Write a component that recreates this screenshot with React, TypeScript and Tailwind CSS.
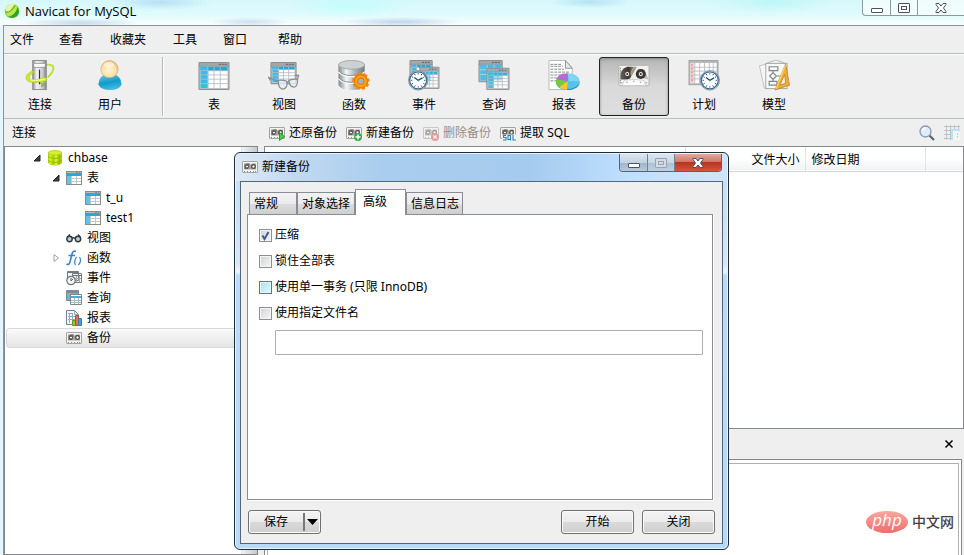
import React from "react";

/* ---------- shared drawing parts ---------- */

function Grid({ x = 0, y = 0, w = 32, h = 29 }: { x?: number; y?: number; w?: number; h?: number }) {
    const cols = [0.27, 0.5, 0.73];
    const rows = [0.18, 0.38, 0.58, 0.79];
    const iw = w - 4;
    const ih = h - 7;
    return (
        <g transform={`translate(${x} ${y})`}>
            <rect width={w} height={h} rx="1" fill="#8b8d8f" />
            <rect x="1" y="1" width={w - 2} height="3" fill="#a5a6a8" />
            {[11, 8, 5].map((d) => (
                <rect key={d} x={w - d} y="2" width="2" height="1" fill="#5e6063" />
            ))}
            <rect x="1" y="5" width={w - 2} height={h - 6} fill="#b9bbbd" />
            <rect x="2" y="5" width={iw} height={ih} fill="#fff" />
            <rect x="2" y="5" width={iw} height={ih * 0.2} fill="#1da9de" />
            <rect x="2" y="5" width={iw * 0.29} height={ih} fill="#3eb8e4" />
            {cols.map((c) => (
                <path key={c} d={`M${2 + iw * c} 5v${ih}`} stroke="#b4bec3" strokeWidth="0.9" />
            ))}
            {rows.map((r) => (
                <path key={r} d={`M2 ${5 + ih * r}h${iw}`} stroke="#b4bec3" strokeWidth="0.9" />
            ))}
        </g>
    );
}

function ClockFace({ cx, cy, r }: { cx: number; cy: number; r: number }) {
    return (
        <g>
            <circle cx={cx} cy={cy} r={r} fill="#fff" stroke="#8193a3" strokeWidth="1" />
            <circle cx={cx} cy={cy} r={r - 1.2} fill="#fdfeff" stroke="#3c6890" strokeWidth="1.3" />
            {[0, 30, 60, 90, 120, 150, 180, 210, 240, 270, 300, 330].map((a) => (
                <path
                    key={a}
                    d={`M${cx} ${cy - r + 2.5}v1.4`}
                    stroke="#2a3b4a"
                    strokeWidth="0.9"
                    transform={`rotate(${a} ${cx} ${cy})`}
                />
            ))}
            <path d={`M${cx - 4} ${cy - 3}l4 3l4.5 -2.5`} fill="none" stroke="#1c4a63" strokeWidth="1.3" />
            <circle cx={cx} cy={cy} r="1.1" fill="#2798a8" />
        </g>
    );
}

/* ---------- toolbar icons ---------- */

function ConnectIcon() {
    return (
        <svg viewBox="0 0 32 32" className="h-8 w-8" aria-hidden="true">
            <defs>
                <linearGradient id="tower" x1="0" x2="1">
                    <stop offset="0" stopColor="#8f8f8f" />
                    <stop offset="0.3" stopColor="#f4f4f4" />
                    <stop offset="0.7" stopColor="#cfcfcf" />
                    <stop offset="1" stopColor="#838383" />
                </linearGradient>
            </defs>
            <path d="M8 11Q22 2 29 6Q32 10 24 18" fill="none" stroke="#b8e22c" strokeWidth="2" />
            <rect x="8.5" y="0.5" width="14" height="30" fill="url(#tower)" stroke="#8c8c8c" />
            <path d="M10 3.5h11M10 7.5h11" stroke="#979797" />
            <rect x="10" y="4" width="11" height="3" fill="#fafafa" />
            <path d="M15.5 10v15" stroke="#303030" strokeWidth="1.2" />
            <path
                d="M9 11Q1 14 1.500 19Q3 24 13 23L22 22Q24 20 22 18Q13 21 6 20Q3 17 9 13Z"
                fill="#c6ed2c"
                stroke="#9dcb1a"
                strokeWidth="0.6"
            />
            <path d="M6 20.500Q14 22 21 19.500" fill="none" stroke="#f6ff7d" strokeWidth="1.4" />
            <path d="M16 24h2v2h2v-2h2M18 26v2" fill="none" stroke="#83b51b" strokeWidth="1.2" />
        </svg>
    );
}

function UserIcon() {
    return (
        <svg viewBox="0 0 32 32" className="h-8 w-8" aria-hidden="true">
            <defs>
                <radialGradient id="head" cx="0.45" cy="0.6" r="0.65">
                    <stop offset="0" stopColor="#fff3d3" />
                    <stop offset="0.65" stopColor="#fbdfa6" />
                    <stop offset="1" stopColor="#e2b264" />
                </radialGradient>
                <linearGradient id="torso" x1="0" x2="0.3" y1="0" y2="1">
                    <stop offset="0" stopColor="#66c7e2" />
                    <stop offset="0.6" stopColor="#129dcb" />
                    <stop offset="1" stopColor="#40b9e0" />
                </linearGradient>
            </defs>
            <path d="M4 25Q5 16 12 15H20Q27 16 28 25Q26 31 16 31T4 25Z" fill="url(#torso)" />
            <circle cx="15.500" cy="9.500" r="8.900" fill="url(#head)" stroke="#c9a262" strokeWidth="0.6" />
            <ellipse cx="15" cy="5" rx="5.500" ry="3" fill="#fff" opacity="0.5" />
        </svg>
    );
}

function TableIcon() {
    return (
        <svg viewBox="0 0 32 32" className="h-8 w-8" aria-hidden="true">
            <Grid y={2} />
        </svg>
    );
}

function ViewIcon() {
    return (
        <svg viewBox="0 0 32 32" className="h-8 w-8" aria-hidden="true">
            <Grid x={2} y={2} w={27} h={23} />
            <g fill="#e3edf1" fillOpacity="0.85" stroke="#868e92" strokeWidth="1.3">
                <path d="M10 21Q15 20 19 22Q20 30 14 30Q10 29 10 21Z" />
                <path d="M21 21Q27 19 30 20Q30 28 26 28Q22 28 21 21Z" />
                <path d="M19 23l2 -1M10 22L0 18l2 3M30 20l1 -4l-4 0" fill="none" />
            </g>
        </svg>
    );
}

function FunctionIcon() {
    return (
        <svg viewBox="0 0 32 32" className="h-8 w-8" aria-hidden="true">
            <defs>
                <linearGradient id="drum" x1="0" x2="1">
                    <stop offset="0" stopColor="#7f8789" />
                    <stop offset="0.3" stopColor="#f5f7f7" />
                    <stop offset="0.65" stopColor="#a6aeb0" />
                    <stop offset="1" stopColor="#727b7e" />
                </linearGradient>
                <radialGradient id="cog">
                    <stop offset="0" stopColor="#ffe36b" />
                    <stop offset="0.6" stopColor="#ffb21e" />
                    <stop offset="1" stopColor="#f27c0a" />
                </radialGradient>
            </defs>
            <path d="M0 5V26Q3 31 13 31T27 26V5Z" fill="url(#drum)" />
            <path d="M0 12Q4 17 13 17T27 12M0 19Q4 24 13 24T27 19" fill="none" stroke="#f8fafa" strokeWidth="1.5" />
            <path d="M0 11Q4 16 13 16T27 11M0 18Q4 23 13 23T27 18" fill="none" stroke="#727d80" strokeWidth="0.8" />
            <ellipse cx="13.500" cy="5" rx="13.500" ry="4.500" fill="#ccd2d3" stroke="#959da0" strokeWidth="0.8" />
            <g fill="#f58a0b">
                {[0, 40, 80, 120, 160, 200, 240, 280, 320].map((a) => (
                    <path key={a} d="M21 17l0.600 -4h3l0.600 4z" transform={`rotate(${a} 23.100 22)`} />
                ))}
            </g>
            <circle cx="23.100" cy="22" r="7" fill="url(#cog)" stroke="#ed780a" />
            <circle cx="23.100" cy="22" r="3.300" fill="#a8b3b7" stroke="#d77910" strokeWidth="1.2" />
        </svg>
    );
}

function EventIcon() {
    return (
        <svg viewBox="0 0 32 32" className="h-8 w-8" aria-hidden="true">
            <Grid x={1} y={0} w={24} h={22} />
            <g opacity="0.9">
                <Grid x={11} y={7} w={21} h={23} />
            </g>
            <rect x="12" y="12" width="11" height="9" fill="#58bde2" opacity="0.5" />
            <ClockFace cx={10} cy={21} r={10} />
        </svg>
    );
}

function QueryIcon() {
    return (
        <svg viewBox="0 0 32 32" className="h-8 w-8" aria-hidden="true">
            <Grid x={0} y={0} w={25} h={23} />
            <rect x="2" y="5" width="21" height="16" fill="#4fbbe2" opacity="0.8" />
            <path d="M2 10h21M2 15h21M9 5v16M16 5v16" stroke="#a5d8e8" />
            <g opacity="0.92">
                <Grid x={8} y={8} w={24} h={23} />
            </g>
            <rect x="10" y="13" width="14" height="8" fill="#4bb8df" opacity="0.45" />
        </svg>
    );
}

function ReportIcon() {
    return (
        <svg viewBox="0 0 32 32" className="h-8 w-8" aria-hidden="true">
            <path d="M0.500 0.500h17l7 8v22h-24z" fill="#fff" stroke="#b6babb" />
            <path d="M17.500 0.500v8h7z" fill="#e8eaea" stroke="#8d9597" />
            <path
                d="M2 4.500h12M2 6.500h13M2 9.500h14M2 12.500h20M2 15.500h12M2 18.500h7M2 21.500h6"
                stroke="#838687"
                strokeDasharray="3 1"
            />
            <ellipse cx="20" cy="23.500" rx="12" ry="7.500" fill="#198ebd" />
            <ellipse cx="20" cy="22" rx="12" ry="8" fill="#57c0eb" />
            <path d="M20 22L8 20Q11 13 20 14Z" fill="#b76ad2" />
            <path d="M20 22L8 20Q6 24 11 28Z" fill="#76ca36" />
            <path d="M20 22L11 28Q15 31 19 31Z" fill="#f9c82e" />
            <path d="M21 22L20 14Q31 14 32 22Z" fill="#7fd5f5" />
        </svg>
    );
}

function BackupIcon() {
    return (
        <svg viewBox="0 0 32 32" className="h-8 w-8" aria-hidden="true">
            <defs>
                <linearGradient id="reel" x1="0" x2="1">
                    <stop offset="0" stopColor="#6b6256" />
                    <stop offset="0.6" stopColor="#3a342e" />
                    <stop offset="1" stopColor="#968b7c" />
                </linearGradient>
            </defs>
            <rect x="0.500" y="5.500" width="31" height="21" rx="1" fill="#f1f1ef" stroke="#b3b3b1" />
            <path d="M2 20Q1 9 9 7H16L13 12Q15 19 9 20Z" fill="url(#reel)" />
            <path d="M16 7l-4 7l2 2l5 -9z" fill="#a39a8c" />
            <path d="M20 9l7 1l4 10l-5 -1z" fill="#c3bdb4" />
            <circle cx="23" cy="14.500" r="5.200" fill="#3b352f" />
            <circle cx="9" cy="14.500" r="2.600" fill="#f5f5f5" stroke="#26231f" strokeWidth="0.8" />
            <circle cx="23" cy="14.500" r="2.600" fill="#f5f5f5" stroke="#26231f" strokeWidth="0.8" />
            <circle cx="9" cy="14.500" r="1.100" fill="#2c2824" />
            <circle cx="23" cy="14.500" r="1.100" fill="#2c2824" />
            <path d="M4 26l2 -5q10 -2 20 0l2 5" fill="#fcfcfc" stroke="#c9c9c7" strokeWidth="0.8" />
            <path d="M2 8v16M8 23h2M15 22h2M22 23h2M2 23.500h2M28 23.500h2" stroke="#8d8d8a" strokeDasharray="1.500 1" />
        </svg>
    );
}

function PlanIcon() {
    return (
        <svg viewBox="0 0 32 32" className="h-8 w-8" aria-hidden="true">
            <rect x="0.500" y="0.500" width="30" height="25" fill="#b3b6b8" stroke="#a1a3a5" />
            <rect x="2" y="3" width="27" height="21" fill="#fff" />
            <rect x="2" y="3" width="4" height="21" fill="#f9d3d2" />
            <path
                d="M2 7.500h27M2 11.500h27M2 15.500h27M2 19.500h27M6.500 3v21M11.500 3v21M16.500 3v21M21.500 3v21M25.500 3v21"
                stroke="#bfc0c3"
            />
            <path d="M3.500 4v19" stroke="#e26c6c" strokeDasharray="2 2" />
            <ClockFace cx={22} cy={21} r={10} />
        </svg>
    );
}

function ModelIcon() {
    return (
        <svg viewBox="0 0 32 32" className="h-8 w-8" aria-hidden="true">
            <path d="M1 6l8 -2l5 24l-8 1z" fill="#f6f6f6" stroke="#c2c2c2" />
            <path d="M9 3l9 -3l11 4l-5 24H10z" fill="#f1f1f1" stroke="#b5b5b5" />
            <rect x="7.500" y="3.500" width="22" height="26" fill="#f7f8f8" stroke="#a6a6a6" />
            <path
                d="M11 7h9v4h-9zM15 11v2M15 13l3.500 3.500l-3.500 3.500l-3.500 -3.500zM15 20v2M11 22h8v4h-8zM19 16.500h6"
                fill="none"
                stroke="#858585"
                strokeWidth="1.2"
            />
            <path d="M28 4L32 26L17 31Z" fill="#f0ae33" stroke="#b98124" strokeWidth="0.8" />
            <path d="M27 15L28 24L22 26Z" fill="#f7f2e3" stroke="#b67c1a" strokeWidth="0.8" />
            <path d="M28 5L18 30" stroke="#ffdf7c" />
        </svg>
    );
}

/* ---------- 16px icons ---------- */

function SmallTableIcon() {
    return (
        <svg viewBox="0 0 16 16" className="h-4 w-4 shrink-0" shapeRendering="crispEdges" aria-hidden="true">
            <rect y="1" width="16" height="14" fill="#898b8d" />
            <path d="M1 2.500h9M12 2.500h1M14 2.500h1" stroke="#b9bcbe" />
            <rect x="1" y="4" width="14" height="10" fill="#fff" />
            <rect x="1" y="4" width="14" height="2" fill="#2ca6d6" />
            <rect x="1" y="6" width="4" height="8" fill="#62c3e6" />
            <path d="M5 8.500h10M5 11.500h10M5.500 6v8M10.500 6v8" stroke="#c3c7c9" />
        </svg>
    );
}

function DatabaseIcon() {
    return (
        <svg viewBox="0 0 16 16" className="h-4 w-4 shrink-0" aria-hidden="true">
            <path d="M1 2.500V13Q3 15.500 8 15.500T15 13V2.500Z" fill="#b0d800" />
            <path d="M3.500 4v10M9 5v10" stroke="#dcf03a" strokeWidth="2.200" />
            <path d="M12.500 4v10" stroke="#8fbd00" strokeWidth="1.500" />
            <path d="M1 6.500Q4 8.500 8 8.500T15 6.500M1 10.500Q4 12.500 8 12.500T15 10.500" fill="none" stroke="#8db304" strokeWidth="0.9" />
            <ellipse cx="8" cy="2.800" rx="6.800" ry="2.300" fill="#d6ee33" stroke="#a5cb0a" strokeWidth="0.7" />
        </svg>
    );
}

function GlassesIcon() {
    return (
        <svg viewBox="0 0 16 16" className="h-4 w-4 shrink-0" aria-hidden="true">
            <g fill="#acd0dd" stroke="#30383c" strokeWidth="1.4">
                <circle cx="3.500" cy="9" r="2.700" />
                <circle cx="12" cy="9" r="2.700" />
                <path d="M6 8.500Q7.500 7 9 8.500M1.500 7L4 4.500M14 7L12 4.500" fill="none" />
            </g>
        </svg>
    );
}

function FxIcon() {
    return (
        <svg viewBox="0 0 16 16" className="h-4 w-4 shrink-0" fill="none" stroke="#3d82bd" aria-hidden="true">
            <path d="M10 1.500Q7 0 6 4L4 12Q3 15.500 0.500 14M2.500 5.500H9" strokeWidth="1.6" />
            <path d="M10.500 7Q7.500 11 9.500 15M13.500 7Q16 11 12.500 15" strokeWidth="1.2" />
        </svg>
    );
}

function SmallEventIcon() {
    return (
        <svg viewBox="0 0 16 16" className="h-4 w-4 shrink-0" aria-hidden="true">
            <path d="M1.500 1.500h11v9h-11zM6.500 3.500h9v9h-9z" fill="#f3f4f4" stroke="#777d80" />
            <path d="M2 2.500h10M7 5.500h8" stroke="#6f777b" />
            <path d="M8 8.500h7M10.500 6v6M13.500 6v6" stroke="#a2abb0" />
            <circle cx="5" cy="10.500" r="4.200" fill="#f3f5f6" stroke="#6e777c" strokeWidth="1.2" />
            <path d="M5 8v3l2 -2" fill="none" stroke="#536168" />
        </svg>
    );
}

function SmallQueryIcon() {
    return (
        <svg viewBox="0 0 16 16" className="h-4 w-4 shrink-0" aria-hidden="true">
            <path d="M0.500 0.500h12v10h-12z" fill="#5dbbdb" stroke="#7c8a90" />
            <path d="M1 2h11" stroke="#84898c" strokeWidth="2" />
            <path d="M4.500 4.500h11v10h-11z" fill="#fff" stroke="#7c868b" />
            <path d="M5 7h10" stroke="#46aed2" strokeWidth="2" />
            <path d="M5 10.500h10M5 12.500h10M8.500 8v6M12.500 8v6" stroke="#a9b9bf" />
        </svg>
    );
}

function SmallReportIcon() {
    return (
        <svg viewBox="0 0 16 16" className="h-4 w-4 shrink-0" aria-hidden="true">
            <path d="M0.500 0.500h8l4 4v10h-12z" fill="#f3f6f7" stroke="#6d8293" />
            <path d="M8.500 0.500v4h4M2 3.500h5M2 6.500h9M2 9.500h9M3.500 3v10M6.500 3v10" fill="none" stroke="#8fabbd" />
            <path d="M6.500 10.500h3v5h-3z" fill="#93c930" stroke="#669b17" />
            <path d="M9.500 5.500h3v10h-3z" fill="#f26c53" stroke="#c24733" />
            <path d="M12.500 8.500h3v7h-3z" fill="#4d9cd0" stroke="#337db1" />
        </svg>
    );
}

function TapeIcon({ mark }: { mark?: "restore" | "add" | "remove" | "sql" }) {
    return (
        <svg viewBox="0 0 16 16" className={`h-4 w-4 shrink-0 ${mark === "remove" ? "opacity-50" : ""}`} aria-hidden="true">
            <rect x="0.500" y="2.500" width="15" height="11" rx="0.500" fill="#f4f4f2" stroke="#a3a3a1" />
            <path d="M2 4.500h5l1 1h1l1 -1h4v6H2z" fill="#a5a19b" />
            <path d="M2.500 10V6L4.500 4.500H8L6 10z" fill="#6f6a63" />
            <circle cx="5" cy="7.500" r="1.500" fill="#fff" stroke="#45423e" />
            <circle cx="11.500" cy="7.500" r="1.800" fill="#fff" stroke="#45423e" strokeWidth="1.2" />
            <path d="M2 12.500h1M5 12.500h1M8 12.500h1M11 12.500h1M13 12.500h1" stroke="#8a8a88" />
            {mark === "restore" && <path d="M10.500 7.500l5 4l-5 4z" fill="#3fd63e" stroke="#138d20" strokeWidth="0.8" />}
            {mark === "add" && (
                <g>
                    <circle cx="12" cy="12" r="3.900" fill="#2fae3d" />
                    <path d="M9.500 12h5M12 9.500v5" stroke="#fff" strokeWidth="1.5" />
                </g>
            )}
            {mark === "remove" && (
                <g>
                    <circle cx="12" cy="12" r="3.900" fill="#e14747" />
                    <path d="M10.300 10.300l3.400 3.400M13.700 10.300l-3.400 3.400" stroke="#fff" strokeWidth="1.2" />
                </g>
            )}
            {mark === "sql" && (
                <g>
                    <rect x="2" y="9.500" width="14" height="6.500" fill="#eef4f5" />
                    <g fill="none" stroke="#2583a8" strokeWidth="1.1">
                        <path d="M6 10.500H3.500v2H6v2.500H3M8 10.500h2.500v4H8zM10 14l1 1.500M13 10v5h3" />
                    </g>
                </g>
            )}
        </svg>
    );
}

function NavicatLogo() {
    return (
        <svg viewBox="0 0 16 16" className="h-4 w-4" aria-hidden="true">
            <circle cx="8" cy="8" r="7.300" fill="#8fd32a" />
            <path d="M1 5Q5 -1 11 1Q8 5 6 8Q2 10 1 5Z" fill="#e3f6b0" />
            <path d="M13 4Q17 8 13 13Q9 16 4 14Q12 12 13 4Z" fill="#2f9e2b" />
            <path d="M2 10Q9 9 12 2Q14 4 12 8Q9 13 4 13Z" fill="#b9e64c" />
            <path d="M1.500 9.500Q8 9 11 2" fill="none" stroke="#55ac2a" strokeWidth="0.8" />
        </svg>
    );
}

function SearchIcon() {
    return (
        <svg viewBox="0 0 16 16" className="h-4 w-4" aria-hidden="true">
            <path d="M10.500 10.500L15 15" stroke="#5f636b" strokeWidth="2.2" />
            <circle cx="6.500" cy="6.500" r="5.500" fill="#dcecff" stroke="#8496b0" strokeWidth="1.3" />
            <path d="M3.500 6Q4 3 7 3" fill="none" stroke="#fff" strokeWidth="1.5" />
        </svg>
    );
}

function GridViewIcon() {
    return (
        <svg viewBox="0 0 16 16" className="h-4 w-4" shapeRendering="crispEdges" aria-hidden="true">
            <path
                d="M0 1.500h16M0 5.500h7M0 9.500h7M0 13.500h7M2.500 0v15M6.500 0v15M10.500 0v4M14.500 0v4"
                stroke="#c0c1c1"
            />
            <path d="M7 4h9v11H7z" fill="#f5f5f5" />
            <path d="M7 4h9v2H9v9H7z" fill="#b3e4fb" />
            <path d="M13.500 8v6" stroke="#ccc" strokeDasharray="2 1" />
        </svg>
    );
}

function WindowGlyph({ kind, muted = false }: { kind: "min" | "max" | "close"; muted?: boolean }) {
    const stroke = muted ? "#96a3b1" : "#4c5160";
    return (
        <svg viewBox="0 0 12 12" className="h-3 w-3" aria-hidden="true">
            {kind === "min" && <rect x="0.500" y="6.500" width="11" height="4" rx="0.500" fill="#fff" stroke={stroke} />}
            {kind === "max" && (
                <g fill={muted ? "#d3dce5" : "#fff"} stroke={stroke}>
                    <rect x="0.500" y="1.500" width="11" height="9" rx="0.500" />
                    <rect x="3.500" y="4.500" width="5" height="3" />
                </g>
            )}
            {kind === "close" && (
                <path
                    d="M1 1.500h3l2 2.500l2 -2.500h3v1l-2.500 3.500l2.500 3.500v1h-3l-2 -2.500l-2 2.500h-3v-1l2.500 -3.500l-2.500 -3.500z"
                    fill="#fff"
                    stroke={stroke}
                />
            )}
        </svg>
    );
}

function Twisty({ open }: { open: boolean }) {
    return (
        <svg viewBox="0 0 8 8" className="h-2 w-2" aria-hidden="true">
            {open ? (
                <path d="M7 1v6H1z" fill="#404040" stroke="#222" />
            ) : (
                <path d="M2 0.500v7l4.500 -3.500z" fill="#fff" stroke="#a0a0a0" />
            )}
        </svg>
    );
}

/* ---------- data ---------- */

const menus = [
    { label: "文件", width: "w-[49px]" },
    { label: "查看", width: "w-[51px]" },
    { label: "收藏夹", width: "w-[63px]" },
    { label: "工具", width: "w-[50px]" },
    { label: "窗口", width: "w-[55px]" },
    { label: "帮助", width: "w-[50px]" },
];

const accountTools = [
    { label: "连接", icon: <ConnectIcon /> },
    { label: "用户", icon: <UserIcon /> },
];

const objectTools = [
    { label: "表", icon: <TableIcon /> },
    { label: "视图", icon: <ViewIcon /> },
    { label: "函数", icon: <FunctionIcon /> },
    { label: "事件", icon: <EventIcon /> },
    { label: "查询", icon: <QueryIcon /> },
    { label: "报表", icon: <ReportIcon /> },
    { label: "备份", icon: <BackupIcon />, active: true },
    { label: "计划", icon: <PlanIcon /> },
    { label: "模型", icon: <ModelIcon /> },
];

const actions = [
    { label: "还原备份", icon: <TapeIcon mark="restore" /> },
    { label: "新建备份", icon: <TapeIcon mark="add" /> },
    { label: "删除备份", icon: <TapeIcon mark="remove" />, disabled: true },
    { label: "提取 SQL", icon: <TapeIcon mark="sql" /> },
];

const indents = ["pl-[26px]", "pl-[45px]", "pl-16"];

const tree: { label: string; level: number; icon: React.ReactNode; open?: boolean; selected?: boolean }[] = [
    { label: "chbase", level: 0, icon: <DatabaseIcon />, open: true },
    { label: "表", level: 1, icon: <SmallTableIcon />, open: true },
    { label: "t_u", level: 2, icon: <SmallTableIcon /> },
    { label: "test1", level: 2, icon: <SmallTableIcon /> },
    { label: "视图", level: 1, icon: <GlassesIcon /> },
    { label: "函数", level: 1, icon: <FxIcon />, open: false },
    { label: "事件", level: 1, icon: <SmallEventIcon /> },
    { label: "查询", level: 1, icon: <SmallQueryIcon /> },
    { label: "报表", level: 1, icon: <SmallReportIcon /> },
    { label: "备份", level: 1, icon: <TapeIcon />, selected: true },
];

const tabs = [
    { label: "常规", width: "w-12" },
    { label: "对象选择", width: "w-[58px]" },
    { label: "高级", width: "w-[51px]", active: true },
    { label: "信息日志", width: "w-[57px]" },
];

const options = [
    { id: "compress", label: "压缩", checked: true },
    { id: "lock-tables", label: "锁住全部表" },
    { id: "single-transaction", label: "使用单一事务 (只限 InnoDB)", hot: true },
    { id: "custom-name", label: "使用指定文件名" },
];

/* ---------- components ---------- */

function ToolButton({ label, icon, active = false }: { label: string; icon: React.ReactNode; active?: boolean }) {
    return (
        <button
            type="button"
            aria-pressed={active}
            className={`flex h-[59px] w-[70px] shrink-0 flex-col items-center rounded-[3px] border pt-0.5 ${
                active
                    ? "border-[#222] bg-linear-to-b from-[#b5b5b5] via-[#d9d9d9] to-[#dedede] shadow-[inset_0_1px_3px_#888]"
                    : "border-transparent"
            }`}
        >
            {icon}
            <span className="mt-1 leading-5">{label}</span>
        </button>
    );
}

function TitleBar() {
    return (
        <header className="flex h-[25px] shrink-0 items-start bg-[radial-gradient(ellipse_60px_5px_at_80px_23px,#a9c6e0a0,transparent),radial-gradient(ellipse_60px_5px_at_400px_22px,#a5c4e6b0,transparent),radial-gradient(ellipse_40px_5px_at_250px_22px,#b4cfe8a0,transparent),radial-gradient(ellipse_40px_6px_at_590px_2px,#9fd4f0a0,transparent),radial-gradient(ellipse_50px_8px_at_160px_2px,#9fcdee90,transparent),radial-gradient(ellipse_60px_12px_at_350px_6px,#b9ffffb0,transparent),radial-gradient(ellipse_60px_12px_at_770px_2px,#b2f6f6b0,transparent),linear-gradient(to_bottom,#d5f8fa,#e0fbfc_60%,#fafdfe)] pl-1">
            <div className="flex items-center gap-[5px] pt-px">
                <NavicatLogo />
                <h1 className="font-['Open_Sans',sans-serif] text-[13px] leading-5">Navicat for MySQL</h1>
            </div>
            <div className="ml-auto flex h-4 rounded-bl border-b border-l border-[#8b9a9c] bg-white/60">
                <button type="button" aria-label="最小化" className="flex w-7 items-center justify-center border-r border-[#8b9a9c]">
                    <WindowGlyph kind="min" />
                </button>
                <button type="button" aria-label="最大化" className="flex w-[27px] items-center justify-center border-r border-[#8b9a9c]">
                    <WindowGlyph kind="max" />
                </button>
                <button type="button" aria-label="关闭窗口" className="flex w-[46px] items-center justify-center">
                    <WindowGlyph kind="close" />
                </button>
            </div>
        </header>
    );
}

function ConnectionTree() {
    return (
        <aside className="flex w-[254px] shrink-0 border border-[#828790] bg-white">
            <ul className="min-w-0 flex-1 py-px">
                {tree.map(({ label, level, icon, open, selected }) => (
                    <li
                        key={label + level}
                        className={`mx-px flex h-5 items-center rounded-[3px] border ${
                            selected ? "border-[#d9d9d9] bg-linear-to-b from-[#fafafa] to-[#e5e5e5]" : "border-transparent"
                        }`}
                    >
                        <div className={`flex items-center ${indents[level]}`}>
                            <span className="w-3.5">{open !== undefined && <Twisty open={open} />}</span>
                            {icon}
                            <span className="ml-[5px] leading-4">{label}</span>
                        </div>
                    </li>
                ))}
            </ul>
            <div className="w-4 border-l border-[#e2e2e2] bg-linear-to-r from-[#f3f3f3] to-[#c9c9c9]" />
        </aside>
    );
}

function BackupList() {
    return (
        <div className="h-[283px] shrink-0 border border-[#828790] bg-white">
            <table className="w-full table-fixed border-collapse">
                <thead>
                    <tr className="h-6 border-b border-[#d5d5d5] bg-linear-to-b from-white via-white to-[#f1f2f4]">
                        <th className="w-[420px] border-r border-[#e0e3e6]" />
                        <th className="w-[120px] border-r border-[#e0e3e6] p-0 pt-0.5 pr-[5px] text-right font-normal">文件大小</th>
                        <th className="w-[120px] border-r border-[#e0e3e6] p-0 pt-0.5 pl-1.5 text-left font-normal">修改日期</th>
                        <th />
                    </tr>
                </thead>
            </table>
        </div>
    );
}

function GlossyButton({ children }: { children: React.ReactNode }) {
    return (
        <button
            type="button"
            className="h-6 w-[73px] rounded-[3px] border border-[#707070] bg-[linear-gradient(to_bottom,#f3f3f3,#ebebeb_50%,#dadada_50%,#cfcfcf)] shadow-[inset_0_0_0_1px_#fbfbfb]"
        >
            {children}
        </button>
    );
}

function OptionRow({ id, label, checked = false, hot = false }: { id: string; label: string; checked?: boolean; hot?: boolean }) {
    return (
        <div className="flex h-[26px] items-center">
            <span className="relative h-[13px] w-[13px]">
                <input
                    id={id}
                    type="checkbox"
                    defaultChecked={checked}
                    className={`peer block h-[13px] w-[13px] appearance-none border ${
                        hot
                            ? "border-[#3c7fb1] bg-linear-to-br from-[#a9dcf8] to-[#e8f7ff] shadow-[inset_0_0_0_1px_#def9fa]"
                            : "border-[#8e8f8f] bg-linear-to-br from-[#cfd2d6] to-[#f6f6f6] shadow-[inset_0_0_0_1px_#f4f4f4]"
                    }`}
                />
                <svg
                    viewBox="0 0 13 13"
                    className="pointer-events-none absolute inset-0 hidden h-[13px] w-[13px] peer-checked:block"
                    aria-hidden="true"
                >
                    <path d="M3.500 6.500l2 3.500l4 -7" fill="none" stroke="#41578e" strokeWidth="1.9" />
                </svg>
            </span>
            <label htmlFor={id} className="pl-[3px]">
                {label}
            </label>
        </div>
    );
}

function BackupDialog() {
    return (
        <section
            role="dialog"
            aria-labelledby="dialog-title"
            className="absolute top-[152px] left-[234px] w-[495px] rounded-md border border-[#1d2c3a] bg-[linear-gradient(to_bottom,#c5dcf1,#d5e6f6_28%,#f0f6fc_30%,#b9dbfa_31%,#b7dafa)] px-[5px] pb-[5px] shadow-[inset_0_0_0_1px_#e8f4ff]"
        >
            <div className="-mx-1 mt-px flex h-[27px] items-start rounded-t bg-[linear-gradient(to_right,#dce9f6,#c1d9f0_12%,#a9cdee_30%,#a5cbee_60%,#bfdfff_80%,#d1e4f7)] pl-1.5">
                <div className="flex items-center gap-1 pt-[3px]">
                    <TapeIcon />
                    <h2 id="dialog-title" className="leading-5">
                        新建备份
                    </h2>
                </div>
                <div className="mr-[5px] ml-auto flex h-[18px] overflow-hidden rounded-b border border-t-0 border-[#56616f]">
                    <button
                        type="button"
                        aria-label="最小化对话框"
                        className="flex w-7 items-center justify-center border-r border-[#76818f] bg-[linear-gradient(to_bottom,#dce6f0,#c4d1df_50%,#a1b3c8_50%,#b7cade)]"
                    >
                        <WindowGlyph kind="min" />
                    </button>
                    <button
                        type="button"
                        aria-label="最大化对话框"
                        disabled
                        className="flex w-[27px] items-center justify-center border-r border-[#76818f] bg-[linear-gradient(to_bottom,#dce6f0,#c9d6e3_50%,#adbfd2_50%,#bed0e2)]"
                    >
                        <WindowGlyph kind="max" muted />
                    </button>
                    <button
                        type="button"
                        aria-label="关闭对话框"
                        className="flex w-[46px] items-center justify-center bg-[linear-gradient(to_bottom,#e6a99d,#d27464_48%,#b83420_50%,#d4553c)]"
                    >
                        <WindowGlyph kind="close" />
                    </button>
                </div>
            </div>

            <div className="border border-[#546779] bg-[#efefef] px-1.5 pt-[7px] pb-[9px]">
                <div role="tablist" className="flex items-end pl-0.5">
                    {tabs.map(({ label, width, active }) => (
                        <button
                            key={label}
                            type="button"
                            role="tab"
                            aria-selected={!!active}
                            className={
                                active
                                    ? `relative z-10 -mb-px h-[26px] ${width} border border-b-0 border-[#898c95] bg-white pb-0.5 pl-[7px] text-left`
                                    : `h-[22px] ${width} border border-b-0 border-[#898c95] bg-[linear-gradient(to_bottom,#f2f2f2,#ebebeb_50%,#dddddd_50%,#cfcfcf)] pl-1 text-left whitespace-nowrap`
                            }
                        >
                            {label}
                        </button>
                    ))}
                </div>
                <div
                    role="tabpanel"
                    className="mr-[3px] min-h-[286px] border border-[#898c95] bg-white pt-[7px] pr-[9px] pl-[11px] shadow-[1px_1px_0_#fff]"
                >
                    {options.map((option) => (
                        <OptionRow key={option.id} {...option} />
                    ))}
                    <div className="pt-1 pl-4">
                        <input
                            type="text"
                            aria-label="文件名"
                            className="block h-[25px] w-full rounded-[1px] border border-[#abadb3] bg-white px-1 outline-none"
                        />
                    </div>
                </div>
                <div className="mt-2.5 flex gap-2 pr-px pl-px">
                    <div className="mr-auto flex h-6 rounded-[3px] border border-[#707070] bg-[linear-gradient(to_bottom,#f3f3f3,#ebebeb_50%,#dadada_50%,#cfcfcf)] py-0.5 shadow-[inset_0_0_0_1px_#fbfbfb]">
                        <button type="button" className="w-14 border-r-2 border-[#777]">
                            保存
                        </button>
                        <button type="button" aria-label="更多保存选项" className="flex w-[15px] items-center justify-center">
                            <svg viewBox="0 0 11 6" className="h-1.5 w-[11px]" aria-hidden="true">
                                <path d="M0 0h11l-5.500 6z" fill="#000" />
                            </svg>
                        </button>
                    </div>
                    <GlossyButton>开始</GlossyButton>
                    <GlossyButton>关闭</GlossyButton>
                </div>
            </div>
        </section>
    );
}

export default function App() {
    return (
        <div className="relative flex h-screen flex-col overflow-hidden bg-[#e4f6fb] font-['Noto_Sans','Noto_Sans_CJK_SC',sans-serif] text-xs text-black">
            <TitleBar />
            <main className="ml-[3px] flex min-h-0 flex-1 flex-col border-t border-l border-[#8b9497] bg-[#efefef]">
                <nav className="flex h-7 shrink-0 items-center border-b border-[#b9bdbc] pl-1.5">
                    {menus.map(({ label, width }) => (
                        <button key={label} type="button" className={`${width} shrink-0 text-left`}>
                            {label}
                        </button>
                    ))}
                </nav>

                <div className="flex h-[65px] shrink-0 items-center border-t border-b border-t-[#fafafa] border-b-[#b9bdbc] pl-px">
                    {accountTools.map((tool) => (
                        <ToolButton key={tool.label} {...tool} />
                    ))}
                    <div className="mr-[15px] ml-[17px] h-[59px] w-0.5 shrink-0 border-l border-[#b8b8b8] bg-white" />
                    {objectTools.map((tool) => (
                        <ToolButton key={tool.label} {...tool} />
                    ))}
                </div>

                <div className="flex h-[27px] shrink-0 items-center pt-px">
                    <h2 className="w-[265px] shrink-0 pl-2">连接</h2>
                    <div className="flex gap-[9px]">
                        {actions.map(({ label, icon, disabled }) => (
                            <button
                                key={label}
                                type="button"
                                disabled={disabled}
                                className={`flex items-center gap-1 whitespace-nowrap ${disabled ? "text-[#9a8d88]" : ""}`}
                            >
                                {icon}
                                {label}
                            </button>
                        ))}
                    </div>
                    <div className="ml-auto flex gap-[9px] pr-1">
                        <button type="button" aria-label="搜索">
                            <SearchIcon />
                        </button>
                        <button type="button" aria-label="网格显示">
                            <GridViewIcon />
                        </button>
                    </div>
                </div>

                <div className="flex min-h-0 flex-1 gap-1.5">
                    <ConnectionTree />
                    <div className="flex min-w-0 flex-1 flex-col">
                        <BackupList />
                        <div className="flex h-[30px] shrink-0 items-center justify-end pr-2.5">
                            <button type="button" aria-label="关闭信息面板">
                                <svg viewBox="0 0 10 10" className="h-2.5 w-2.5" aria-hidden="true">
                                    <path d="M1.500 1.500l7 7M8.500 1.500l-7 7" stroke="#000" strokeWidth="1.5" />
                                </svg>
                            </button>
                        </div>
                        <div className="mr-0.5 flex-1 border border-b-0 border-[#828790] bg-white px-0.5 pt-[3px]">
                            <div className="h-full border border-b-0 border-[#b0b0b0] bg-white" />
                        </div>
                    </div>
                </div>
            </main>

            <BackupDialog />

            <a href="#php" className="absolute right-2.5 bottom-[22px] flex items-center gap-1 text-[#4b3c3c]">
                <span className="flex h-[22px] w-[42px] items-center justify-center rounded-[50%] bg-linear-to-b from-[#f9a79f] to-[#ef6b6c] pb-1 font-['Open_Sans',sans-serif] text-[17px] leading-4 text-white italic">
                    php
                </span>
                <span className="text-sm leading-5 font-medium">中文网</span>
            </a>
        </div>
    );
}
